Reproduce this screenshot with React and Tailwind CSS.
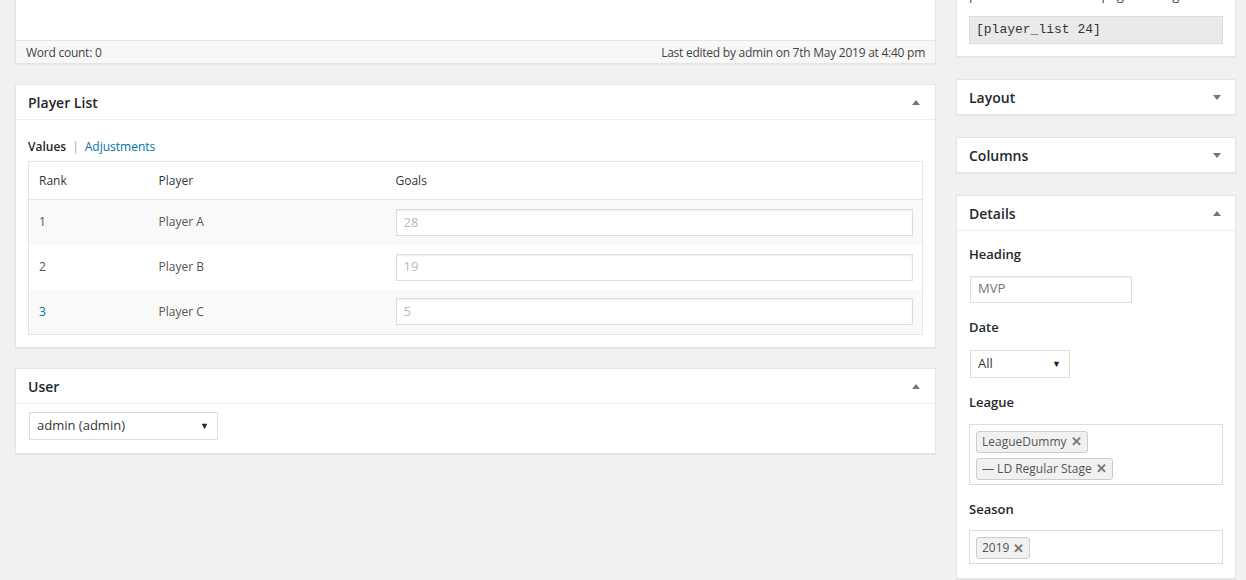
import React from "react";

const font = { fontFamily: '"Open Sans", "Noto Sans", sans-serif' };

const Caret = ({ up = true }) => (
  <svg width="8" height="5" viewBox="0 0 8 5" className="fill-[#72777c]">
    {up ? <path d="M0 5 L4 0 L8 5 Z" /> : <path d="M0 0 L4 5 L8 0 Z" />}
  </svg>
);

const Box = ({ title, open = true, children, pr = "pr-[15px]" }) => (
  <div className="bg-white border border-[#e5e5e5] shadow-[0_1px_1px_rgba(0,0,0,0.04)]">
    <div className={`flex items-center justify-between pl-[12px] ${pr} ${open ? "h-[35px] border-b border-[#eee]" : "h-[34px]"}`}>
      <h2 className="text-[14px] font-semibold text-[#23282d]">{title}</h2>
      <Caret up={open} />
    </div>
    {open && children}
  </div>
);

const Tag = ({ label }) => (
  <span className="inline-flex items-center gap-[4px] h-[22px] px-[5px] bg-[#f1f1f1] border border-[#ccc] rounded-[3px] text-[12px] text-[#555]">
    {label}
    <span className="text-[#777] text-[13px] font-bold leading-none">✕</span>
  </span>
);

const rows = [
  { rank: "1", name: "Player A", goals: "28" },
  { rank: "2", name: "Player B", goals: "19" },
  { rank: "3", name: "Player C", goals: "5" },
];

export default function App() {
  return (
    <div style={font} className="h-[580px] overflow-hidden bg-[#f1f1f1] text-[13px] text-[#444]">
      <div className="flex gap-[20px] pl-[15px] pr-[10px]">
        {/* main column */}
        <div className="w-[921px] flex flex-col gap-[20px]">
          <div className="bg-white border border-t-0 border-[#e5e5e5] shadow-[0_1px_1px_rgba(0,0,0,0.04)]">
            <div className="h-[40px]" />
            <div className="flex justify-between items-center h-[23px] pt-[1px] px-[10px] bg-[#f7f7f7] border-t border-[#e5e5e5] text-[12px] tracking-[-0.25px] text-[#444]">
              <span>Word count: 0</span>
              <span>Last edited by admin on 7th May 2019 at 4:40 pm</span>
            </div>
          </div>

          <Box title="Player List">
            <div className="px-[12px] pt-[18px] pb-[12px]">
              <div className="flex items-center gap-[6px] text-[12px] mb-[5px]">
                <span className="font-semibold text-[#23282d]">Values</span>
                <span className="text-[#aaa]">|</span>
                <span className="text-[#0073aa]">Adjustments</span>
              </div>
              <table className="w-full border border-[#e5e5e5] border-collapse text-[12px] text-[#555]">
                <thead>
                  <tr className="h-[38px] border-b border-[#e5e5e5] text-[#32373c]">
                    <th className="w-[130px] pl-[10px] text-left font-normal">Rank</th>
                    <th className="w-[237px] text-left font-normal">Player</th>
                    <th className="text-left font-normal">Goals</th>
                  </tr>
                </thead>
                <tbody>
                  {rows.map((r, i) => (
                    <tr key={r.rank} className={`h-[45px] ${i % 2 === 0 ? "bg-[#f9f9f9]" : "bg-white"}`}>
                      <td className={`pl-[10px] ${i === 2 ? "text-[#0073aa]" : ""}`}>{r.rank}</td>
                      <td>{r.name}</td>
                      <td className="pr-[9px]">
                        <div className="h-[27px] flex items-center px-[7px] bg-white border border-[#ddd] shadow-[inset_0_1px_2px_rgba(0,0,0,0.07)] text-[#bbb] text-[13px]">
                          {r.goals}
                        </div>
                      </td>
                    </tr>
                  ))}
                </tbody>
              </table>
            </div>
          </Box>

          <Box title="User">
            <div className="px-[12px] pt-[8px] pb-[13px]">
              <div className="ml-[1px] w-[189px] h-[28px] flex items-center justify-between pl-[7px] pr-[8px] border border-[#ddd] text-[13px] text-[#32373c]">
                <span>admin (admin)</span>
                <span className="text-[9px] text-[#222]">▼</span>
              </div>
            </div>
          </Box>
        </div>

        {/* sidebar */}
        <div className="w-[280px] flex flex-col gap-[22px]">
          <div className="bg-white border border-t-0 border-[#e5e5e5] shadow-[0_1px_1px_rgba(0,0,0,0.04)] px-[12px] pb-[12px]">
            <div className="h-[16px] overflow-hidden">
              <p className="-mt-[14px] text-[13px] text-[#444]">paste this code into a page or widget</p>
            </div>
            <div className="h-[28px] flex items-center px-[6px] bg-[#eaeaea] border border-[#ddd] text-[13px] text-[#32373c]" style={{ fontFamily: '"Liberation Mono", monospace' }}>
              [player_list 24]
            </div>
          </div>

          <Box title="Layout" open={false} pr="pr-[14px]" />
          <Box title="Columns" open={false} pr="pr-[14px]" />

          <Box title="Details" pr="pr-[14px]">
            <div className="px-[12px] pt-[14px] pb-[14px] text-[13px]">
              <p className="font-semibold text-[#23282d] mb-[11px]">Heading</p>
              <div className="ml-[1px] w-[162px] h-[27px] flex items-center px-[7px] border border-[#ddd] shadow-[inset_0_1px_2px_rgba(0,0,0,0.07)] text-[#72777c] text-[13px]">
                MVP
              </div>
              <p className="font-semibold text-[#23282d] mt-[15px] mb-[13px]">Date</p>
              <div className="ml-[1px] w-[100px] h-[28px] flex items-center justify-between pl-[7px] pr-[8px] border border-[#ddd] text-[#32373c]">
                <span>All</span>
                <span className="text-[9px] text-[#222]">▼</span>
              </div>
              <p className="font-semibold text-[#23282d] mt-[15px] mb-[11px]">League</p>
              <div className="h-[61px] border border-[#ddd] px-[6px] pt-[6px] flex flex-col items-start gap-[5px]">
                <Tag label="LeagueDummy" />
                <Tag label="— LD Regular Stage" />
              </div>
              <p className="font-semibold text-[#23282d] mt-[15px] mb-[11px]">Season</p>
              <div className="h-[34px] border border-[#ddd] px-[6px] pt-[6px]">
                <Tag label="2019" />
              </div>
            </div>
          </Box>
        </div>
      </div>
    </div>
  );
}
